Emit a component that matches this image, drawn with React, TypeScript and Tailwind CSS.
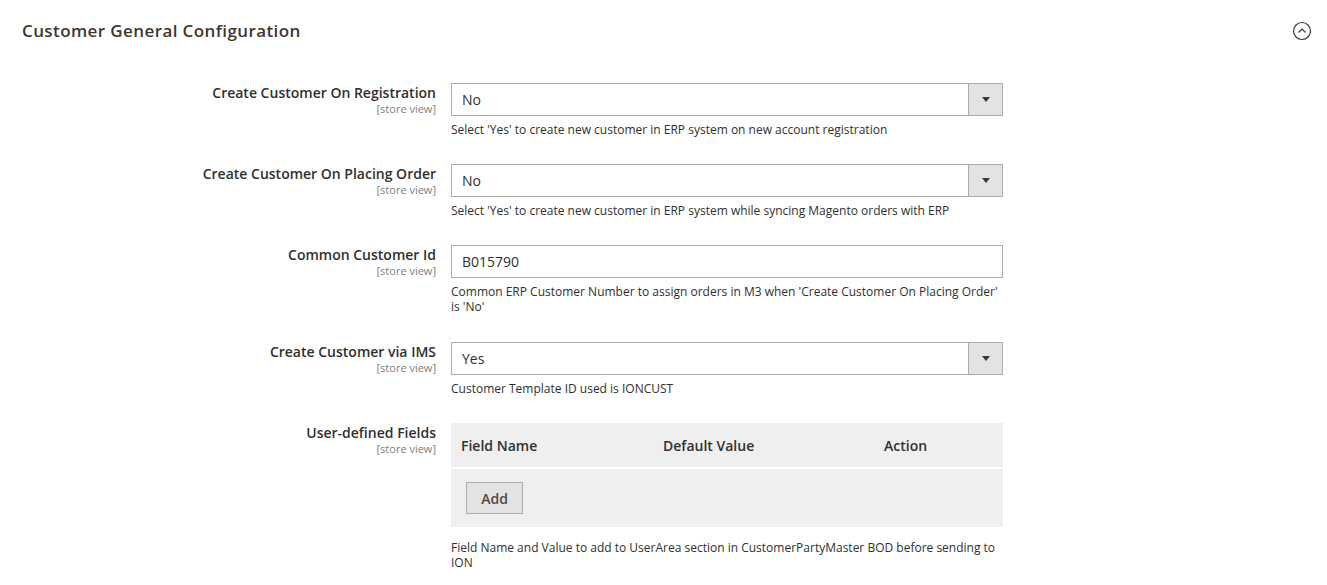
const ChevronCircle = () => (
  <svg width="20" height="20" viewBox="0 0 20 20" aria-hidden="true">
    <circle cx="10" cy="10" r="8.5" fill="none" stroke="#41362f" strokeWidth="1.2" />
    <path d="M6.5 11.5 L10 8 L13.5 11.5" fill="none" stroke="#41362f" strokeWidth="1.2" />
  </svg>
);

const FieldLabel = ({ text }: { text: string }) => (
  <div className="w-[436px] shrink-0 pt-[1px] text-right">
    <div className="text-[14px] font-semibold leading-[18px] text-[#303030]">{text}</div>
    <div className="text-[11px] leading-[13px] text-[#808080]">[store view]</div>
  </div>
);

const SelectBox = ({ value }: { value: string }) => (
  <div className="flex h-[33px] w-[552px] border border-[#adadad] bg-white">
    <div className="flex flex-1 items-center pl-[10px] text-[14px] text-[#303030]">{value}</div>
    <div className="flex w-[34px] items-center justify-center border-l border-[#adadad] bg-[#e3e3e3]">
      <span className="h-0 w-0 border-x-[4px] border-t-[5px] border-x-transparent border-t-[#41362f]" />
    </div>
  </div>
);

const Help = ({ children, className = "mt-[6px]" }: { children: React.ReactNode; className?: string }) => (
  <p className={`${className} w-[552px] text-[12px] leading-[15px] text-[#303030]`}>{children}</p>
);

export default function App() {
  return (
    <div className="min-h-[585px] bg-white font-['Open_Sans',sans-serif]">
      <div className="flex items-center justify-between pl-[22px] pr-[15px] pt-[19px]">
        <h2 className="text-[17px] font-semibold leading-[24px] tracking-[0.4px] text-[#41362f]">
          Customer General Configuration
        </h2>
        <ChevronCircle />
      </div>

      <div className="mt-[40px] flex flex-col">
        <div className="flex gap-[15px]">
          <FieldLabel text="Create Customer On Registration" />
          <div>
            <SelectBox value="No" />
            <Help>Select 'Yes' to create new customer in ERP system on new account registration</Help>
          </div>
        </div>

        <div className="mt-[27px] flex gap-[15px]">
          <FieldLabel text="Create Customer On Placing Order" />
          <div>
            <SelectBox value="No" />
            <Help>Select 'Yes' to create new customer in ERP system while syncing Magento orders with ERP</Help>
          </div>
        </div>

        <div className="mt-[27px] flex gap-[15px]">
          <FieldLabel text="Common Customer Id" />
          <div>
            <div className="flex h-[33px] w-[552px] items-center border border-[#adadad] bg-white pl-[10px] text-[14px] text-[#303030]">
              B015790
            </div>
            <Help>
              Common ERP Customer Number to assign orders in M3 when 'Create Customer On Placing Order' is 'No'
            </Help>
          </div>
        </div>

        <div className="mt-[28px] flex gap-[15px]">
          <FieldLabel text="Create Customer via IMS" />
          <div>
            <SelectBox value="Yes" />
            <Help>Customer Template ID used is IONCUST</Help>
          </div>
        </div>

        <div className="mt-[27px] flex gap-[15px]">
          <FieldLabel text="User-defined Fields" />
          <div>
            <div className="w-[552px] bg-[#efefef]">
              <div className="grid h-[46px] grid-cols-[202px_221px_1fr] items-center border-b-2 border-white px-[10px] pt-[1px] text-[14px] font-semibold text-[#303030]">
                <span>Field Name</span>
                <span>Default Value</span>
                <span>Action</span>
              </div>
              <div className="px-[15px] pb-[13px] pt-[13px]">
                <button
                  type="button"
                  className="h-[32px] w-[57px] border border-[#adadad] bg-[#e3e3e3] text-[14px] font-semibold text-[#514943]"
                >
                  Add
                </button>
              </div>
            </div>
            <Help className="mt-[13px]">
              Field Name and Value to add to UserArea section in CustomerPartyMaster BOD before sending to ION
            </Help>
          </div>
        </div>
      </div>
    </div>
  );
}
